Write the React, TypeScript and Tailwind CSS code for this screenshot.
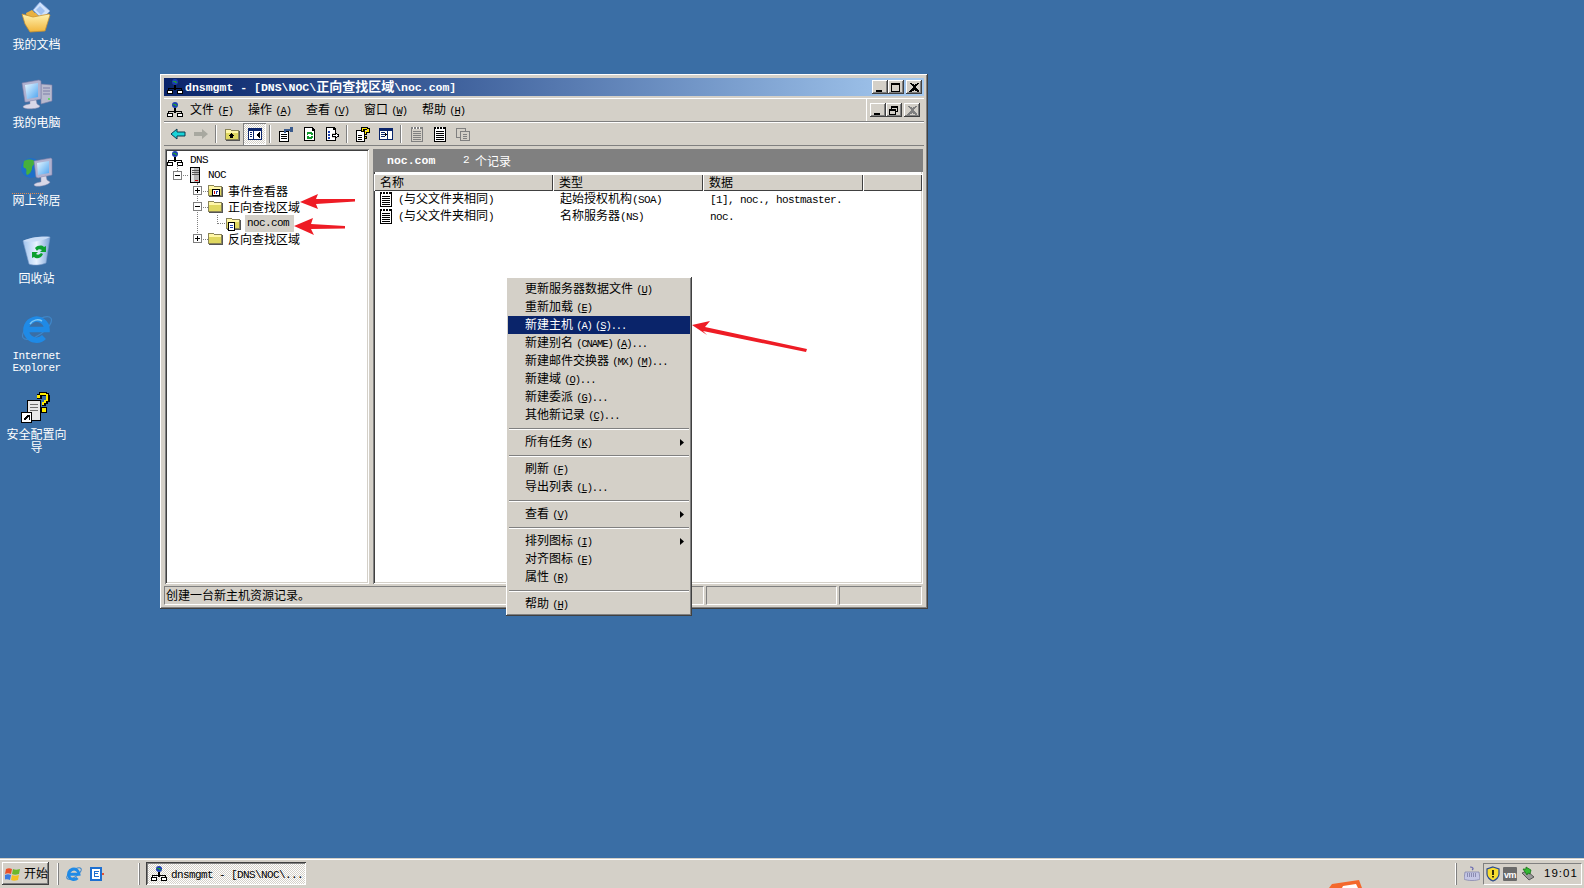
import { ReactNode } from "react";

const cjk = "[font-family:'Noto_Sans_CJK_SC',sans-serif]";
const raised =
  "shadow-[inset_-1px_-1px_#404040,inset_1px_1px_#fff,inset_-2px_-2px_#808080,inset_2px_2px_#d4d0c8]";
const sunken =
  "shadow-[inset_1px_1px_#808080,inset_-1px_-1px_#fff,inset_2px_2px_#404040,inset_-2px_-2px_#d4d0c8]";
const dither = "[background:repeating-conic-gradient(#fff_0_25%,#d4d0c8_0_50%)_0_0/2px_2px]";

// ascii runs get a narrow mono face so they keep the 6px cell of the old bitmap font
function Label({ text, tight }: { text: string; tight?: boolean }) {
  const parts = text.match(/[\x20-\x7e]+|[^\x20-\x7e]+/g) ?? [];
  return (
    <>
      {parts.map((part, i) =>
        /^[\x20-\x7e]/.test(part) ? (
          <span
            key={i}
            className={
              tight
                ? "whitespace-pre [font-family:'Liberation_Mono',monospace] text-[10.5px] tracking-[-1.1px] [word-spacing:-2px]"
                : "whitespace-pre [font-family:'Liberation_Mono',monospace] text-[11px] tracking-[-0.6px]"
            }
          >
            {part.split(/&(.)/).map((piece, j) => (j % 2 ? <u key={j}>{piece}</u> : piece))}
          </span>
        ) : (
          <span key={i}>{part}</span>
        ),
      )}
    </>
  );
}

/* ---------- small 16px icons ---------- */

function DnsIcon() {
  return (
    <svg width="16" height="16" viewBox="0 0 16 16" shapeRendering="crispEdges">
      <circle cx="8" cy="3" r="3" fill="#1c3fb0" shapeRendering="auto" />
      <path d="M6 2h3v1h1v1H8V3H6z" fill="#1f9a3a" />
      <path d="M7 6h2v3h6v2h-1v-1H9v1H7v-1H2v1H1V9h6z" fill="#000" />
      <path d="M0 11h6v4H0zM10 11h6v4h-6z" fill="#000" />
      <path d="M1 12h4v2H1zM11 12h4v2h-4z" fill="#fff" />
    </svg>
  );
}

function ServerIcon() {
  return (
    <svg width="16" height="18" viewBox="0 0 16 18" shapeRendering="crispEdges">
      <path d="M3 1h10v16H3z" fill="#000" />
      <path d="M4 2h8v14H4z" fill="#b8b8b8" />
      <path d="M4 2h3v14H4z" fill="#e8e8e8" />
      <path d="M5 4h7v1H5zM5 6h7v1H5zM5 8h7v1H5z" fill="#555" />
      <path d="M8 14h3v1H8z" fill="#d00000" />
    </svg>
  );
}

function Folder({ children }: { children?: ReactNode }) {
  return (
    <svg width="16" height="16" viewBox="0 0 16 16" shapeRendering="crispEdges">
      <path d="M1 3h5l1 1h8v10H1z" fill="#8a8458" />
      <path d="M2 4h4l1 1h7v8H2z" fill="#fff7a8" />
      <path d="M2 7h12v6H2z" fill="#e0d860" />
      <path d="M15 5h1v10H2v-1h13z" fill="#555" />
      {children}
    </svg>
  );
}

function Doc({ muted }: { muted?: boolean }) {
  const ink = muted ? "#808080" : "#000";
  return (
    <svg width="16" height="16" viewBox="0 0 16 16" shapeRendering="crispEdges">
      <path d="M2 1h12v15H2z" fill={ink} />
      <path d="M3 3h10v12H3z" fill={muted ? "#d4d0c8" : "#fff"} />
      <path d="M4 1h1v2H4zM7 1h1v2H7zM10 1h1v2h-1z" fill="#fff" />
      <path d="M4 5h8v1H4zM4 7h8v1H4zM4 9h8v1H4zM4 11h8v1H4zM4 13h8v1H4z" fill={ink} />
    </svg>
  );
}

function PaneIcon({ flip }: { flip?: boolean }) {
  return (
    <svg width="16" height="16" viewBox="0 0 16 16" shapeRendering="crispEdges">
      <path d="M1 2h14v12H1z" fill="#0a246a" />
      <path d="M2 5h12v8H2z" fill="#fff" />
      <path d={flip ? "M9 5h1v8H9z" : "M6 5h1v8H6z"} fill="#0a246a" />
      <path d={flip ? "M3 6h4v1H3zM3 8h4v1H3zM3 10h4v1H3z" : "M3 6h2v1H3zM3 8h2v1H3zM3 10h2v1H3z"} fill="#0a246a" />
      <path d={flip ? "M7 7h1v1h1v1H8v1H7z" : "M12 6h1v6h-1v-1h-1v-1h-1V8h1V7h1z"} fill="#000" />
    </svg>
  );
}

function ToolIcon({ name }: { name: string }) {
  switch (name) {
    case "back":
      return (
        <svg width="16" height="16" viewBox="0 0 16 16">
          <path d="M1 8l6-5v3h8v4H7v3z" fill="#19d4d8" stroke="#0a3a50" strokeWidth="1" />
        </svg>
      );
    case "forward":
      return (
        <svg width="16" height="16" viewBox="0 0 16 16">
          <path d="M15 8L9 3v3H1v4h8v3z" fill="#a8a8a0" />
        </svg>
      );
    case "up":
      return (
        <Folder>
          <path d="M7 7h1v1h1v1h1v1H9v2H6v-2H5V9h1V8h1z" fill="#000" />
        </Folder>
      );
    case "tree":
      return <PaneIcon />;
    case "pane":
      return <PaneIcon flip />;
    case "props":
      return (
        <svg width="16" height="16" viewBox="0 0 16 16" shapeRendering="crispEdges">
          <path d="M1 5h10v11H1z" fill="#000" />
          <path d="M2 6h8v9H2z" fill="#fff" />
          <path d="M3 8h6v1H3zM3 10h6v1H3zM3 12h6v1H3z" fill="#000" />
          <path d="M6 3h6V1h3v5h-3V5H8v2H6z" fill="#3a5a8c" />
        </svg>
      );
    case "refresh":
      return (
        <svg width="16" height="16" viewBox="0 0 16 16" shapeRendering="crispEdges">
          <path d="M3 1h8l3 3v11H3z" fill="#000" />
          <path d="M4 2h7v3h2v9H4z" fill="#fff" />
          <path d="M6 6h5v1h1v2h-2V8H7v1H6zM6 10h2v1h2v-1h2v2h-1v1H6z" fill="#149a30" />
        </svg>
      );
    case "export":
      return (
        <svg width="16" height="16" viewBox="0 0 16 16" shapeRendering="crispEdges">
          <path d="M2 1h8l2 2v4h-1V4H9V2H3v12h8v-2h1v3H2z" fill="#000" />
          <path d="M3 2h6v2h2v3H8v5h3v2H3z" fill="#fff" />
          <path d="M4 5h2v2H4zM4 8h2v2H4zM4 11h2v2H4z" fill="#1c3fb0" />
          <path d="M11 6h1v1h1v1h2v3h-2v1h-1v1h-1v-2H8V8h3z" fill="#000" />
          <path d="M12 8h1v1h1v1h-1v1h-1v-1H9V9h3z" fill="#fff" />
        </svg>
      );
    case "help":
      return (
        <svg width="16" height="16" viewBox="0 0 16 16" shapeRendering="crispEdges">
          <path d="M1 4h9v12H1z" fill="#000" />
          <path d="M2 5h7v10H2z" fill="#fff" />
          <path d="M3 9h4v1H3zM3 11h4v1H3zM3 13h4v1H3z" fill="#000" />
          <path d="M6 1h7v1h2v5h-3v2H9V6h3V4H9v2H6V3z" fill="#000" />
          <path d="M7 2h5v1h2v3h-3v2h-1V5h2V3H8v2H7z" fill="#ffe800" />
          <path d="M9 10h3v3H9z" fill="#000" />
          <path d="M10 11h1v1h-1z" fill="#ffe800" />
        </svg>
      );
    case "greydoc":
      return <Doc muted />;
    case "doc":
      return <Doc />;
    default:
      return (
        <svg width="16" height="16" viewBox="0 0 16 16" shapeRendering="crispEdges">
          <path d="M1 2h10v3h4v10H5v-3H1z" fill="#808080" />
          <path d="M2 3h8v2H5v6H2z" fill="#d4d0c8" />
          <path d="M6 6h8v8H6z" fill="#d4d0c8" />
          <path d="M8 8h4v1H8zM8 10h4v1H8zM8 12h4v1H8z" fill="#808080" />
        </svg>
      );
  }
}

/* ---------- desktop icons, 32px ---------- */

function DesktopIcon({ name }: { name: string }) {
  switch (name) {
    case "docs":
      return (
        <svg width="32" height="32" viewBox="0 0 32 32">
          <defs>
            <linearGradient id="dfold" x1="0" y1="0" x2="0" y2="1">
              <stop offset="0" stopColor="#fff3b0" />
              <stop offset="1" stopColor="#f2b53c" />
            </linearGradient>
          </defs>
          <path d="M5 12l6-3 3 3 13-2-3 18H8z" fill="#e8b040" />
          <path d="M12 9l7-8 10 9-8 8z" fill="#cfe2fb" stroke="#7c9ed8" strokeWidth="0.8" />
          <path d="M15 9l4-4 5 5-4 4z" fill="#9fc0f0" />
          <path d="M1 13l11 3 16-3 1 1-5 16-15 1-5-8z" fill="url(#dfold)" stroke="#c89030" strokeWidth="0.8" />
        </svg>
      );
    case "computer":
      return (
        <svg width="32" height="32" viewBox="0 0 32 32">
          <defs>
            <linearGradient id="dscr" x1="0" y1="0" x2="1" y2="1">
              <stop offset="0" stopColor="#e8f8ff" />
              <stop offset="1" stopColor="#4ea4f0" />
            </linearGradient>
          </defs>
          <path d="M20 5l11 1v16l-11 3z" fill="#b8bace" stroke="#7c7ea8" strokeWidth="0.6" />
          <path d="M22 9h7M22 12h7M22 15h7" stroke="#7c7ea8" strokeWidth="1" />
          <circle cx="28" cy="20" r="0.9" fill="#40e040" />
          <path d="M1 4l17-3 2 1v18L6 23H4z" fill="#b0b2d0" stroke="#8080a8" strokeWidth="0.6" />
          <path d="M4 6l13-2v14L6 20z" fill="url(#dscr)" />
          <path d="M9 22l6-1 1 4 3 2c0 3-16 4-17 1 0-2 6-3 7-3z" fill="#d8d8e8" stroke="#9090b0" strokeWidth="0.5" />
        </svg>
      );
    case "network":
      return (
        <svg width="32" height="32" viewBox="0 0 32 32">
          <defs>
            <linearGradient id="dscr2" x1="0" y1="0" x2="1" y2="1">
              <stop offset="0" stopColor="#e8f8ff" />
              <stop offset="1" stopColor="#4ea4f0" />
            </linearGradient>
          </defs>
          <circle cx="10" cy="11" r="10" fill="#1e6fc8" />
          <path d="M3 4c4-2 9-2 11 1 0 3-3 3-3 6s-3 7-5 7c-2-3 1-5-2-7-2 0-2-2-1-7z" fill="#46b03c" />
          <path d="M13 4l17-3 1 1v16l-14 3-2-1z" fill="#b0b2d0" stroke="#8080a8" strokeWidth="0.6" />
          <path d="M16 6l12-2v12l-11 2z" fill="url(#dscr2)" />
          <path d="M20 20l5-1 1 4 3 2c0 3-15 6-16 3 0-2 6-3 7-3z" fill="#d8d8e8" stroke="#9090b0" strokeWidth="0.5" />
        </svg>
      );
    case "recycle":
      return (
        <svg width="32" height="32" viewBox="0 0 32 32">
          <defs>
            <linearGradient id="dbin" x1="0" y1="0" x2="1" y2="0">
              <stop offset="0" stopColor="#a0c4ee" />
              <stop offset="0.5" stopColor="#e8f2ff" />
              <stop offset="1" stopColor="#7ca4d8" />
            </linearGradient>
          </defs>
          <path d="M2 6c8-3 20-5 27-4l-4 26c-4 2-13 3-17 1z" fill="url(#dbin)" stroke="#7c9ac8" strokeWidth="0.6" />
          <path d="M2 6c8 2 20 0 27-4-8-1-21 0-27 4z" fill="#c8dcf6" />
          <path d="M14 13c3-3 7-3 9-1l2-1v6h-6l2-2c-2-1-4-1-5 1zM22 19c-2 5-7 5-9 3l-2 1v-6h6l-2 2c2 1 3 1 5-1z" fill="#0ca030" />
        </svg>
      );
    case "ie":
      return (
        <svg width="32" height="32" viewBox="0 0 32 32">
          <ellipse cx="16" cy="15" rx="17" ry="7" transform="rotate(-35 16 15)" fill="none" stroke="#3f86c8" strokeWidth="1.2" />
          <path d="M6.500 16.500H26A10.500 10.500 0 1 0 23 24" fill="none" stroke="#1f8ae6" strokeWidth="5.500" />
          <path d="M9 11a9 9 0 0 1 12-3" fill="none" stroke="#7cc8f8" strokeWidth="1.500" />
        </svg>
      );
    default:
      return (
        <svg width="32" height="32" viewBox="0 0 32 32" shapeRendering="crispEdges">
          <path d="M6 9h14v21H6z" fill="#000" />
          <path d="M7 10h12v19H7z" fill="#e8e8e8" />
          <path d="M9 13h8v1H9zM9 16h8v1H9zM9 19h8v1H9z" fill="#707070" />
          <path d="M18 1h8v1h2v2h1v7h-2v2h-2v2h-4v-4h2v-2h2V5h-4v3h-5V3h2z" fill="#000" />
          <path d="M19 2h6v1h2v7h-2v2h-2v2h-2v-3h2V9h2V4h-6v3h-3V4h3z" fill="#ffee00" />
          <path d="M20 16h6v6h-6z" fill="#000" />
          <path d="M21 17h4v4h-4z" fill="#ffee00" />
          <path d="M0 21h11v11H0z" fill="#000" />
          <path d="M1 22h9v9H1z" fill="#fff" />
          <path d="M4 24h5v5H8v-3H7v1H6v1H5v1H3v-2h1v-1h1v-1h1v-1H4z" fill="#000" />
        </svg>
      );
  }
}

const desktopIcons = [
  { name: "docs", label: "我的文档" },
  { name: "computer", label: "我的电脑" },
  { name: "network", label: "网上邻居" },
  { name: "recycle", label: "回收站" },
  { name: "ie", label: "Internet Explorer" },
  { name: "wizard", label: "安全配置向导" },
];

/* ---------- window parts ---------- */

function CaptionButton({ kind, disabled }: { kind: string; disabled?: boolean }) {
  const ink = disabled ? "#808080" : "#000";
  return (
    <div className={`flex h-[14px] w-[16px] items-center justify-center bg-[#d4d0c8] ${raised}`}>
      <svg width="10" height="9" viewBox="0 0 10 9" shapeRendering="crispEdges">
        {kind === "min" && <path d="M1 7h6v2H1z" fill={ink} />}
        {kind === "max" && <path d="M0 0h9v9H0zM1 2v6h7V2z" fill={ink} fillRule="evenodd" />}
        {kind === "restore" && (
          <path d="M2 0h7v6H7v3H0V3h2zM3 2v1h4v2h1V2zM1 5v3h5V5z" fill={ink} fillRule="evenodd" />
        )}
        {kind === "close" && (
          <path
            d="M0 0h2l1 1h1l1 1 1-1h1l1-1h2L8 2 7 3 6 4l1 1 1 1 2 2v1H8L7 8H6L5 7 4 8H3L2 9H0V8l2-2 1-1 1-1-1-1-1-1z"
            fill={ink}
          />
        )}
      </svg>
    </div>
  );
}

const menus = ["文件 (&F)", "操作 (&A)", "查看 (&V)", "窗口 (&W)", "帮助 (&H)"];

const toolbar = [
  ["back", "forward"],
  ["up", "tree"],
  ["props", "refresh", "export"],
  ["help", "pane"],
  ["greydoc", "doc", "greystack"],
];

function Toolbar() {
  return (
    <div className="flex h-[24px] items-center border-y border-t-white border-b-[#808080] pl-[2px]">
      {toolbar.map((group, g) => (
        <div key={g} className="flex items-center">
          {g > 0 && (
            <div className="mx-[3px] h-[18px] w-[2px] border-l border-r border-l-[#808080] border-r-white" />
          )}
          {group.map((name) => (
            <div
              key={name}
              className={
                name === "tree"
                  ? `flex h-[22px] w-[23px] items-center justify-center ${dither} shadow-[inset_1px_1px_#808080,inset_-1px_-1px_#fff]`
                  : "flex h-[22px] w-[23px] items-center justify-center"
              }
            >
              <ToolIcon name={name} />
            </div>
          ))}
        </div>
      ))}
    </div>
  );
}

function Expander({ open }: { open?: boolean }) {
  return (
    <div className="relative z-10 flex h-[9px] w-[9px] items-center justify-center border border-[#808080] bg-white">
      <div className="h-[1px] w-[5px] bg-black" />
      {!open && <div className="absolute h-[5px] w-[1px] bg-black" />}
    </div>
  );
}

function TreeRow({
  indent,
  expander,
  icon,
  children,
}: {
  indent: string;
  expander?: ReactNode;
  icon: ReactNode;
  children: ReactNode;
}) {
  return (
    <div className={`flex h-[16px] items-center ${indent}`}>
      <div className="flex w-[10px] justify-center">{expander}</div>
      <div className="relative z-10 ml-[5px] mr-[5px] flex h-[16px] w-[16px] items-center justify-center">{icon}</div>
      {children}
    </div>
  );
}

function Tree() {
  return (
    <div className={`relative w-[204px] bg-white pt-[2px] pl-[2px] ${sunken}`}>
      {/* dotted connectors */}
      <div className="absolute left-[12px] top-[16px] h-[10px] border-l border-dotted border-[#808080]" />
      <div className="absolute left-[32px] top-[34px] h-[56px] border-l border-dotted border-[#808080]" />
      <div className="absolute left-[13px] top-[26px] w-[10px] border-t border-dotted border-[#808080]" />
      <div className="absolute left-[33px] top-[42px] w-[10px] border-t border-dotted border-[#808080]" />
      <div className="absolute left-[33px] top-[58px] w-[10px] border-t border-dotted border-[#808080]" />
      <div className="absolute left-[52px] top-[66px] h-[9px] border-l border-dotted border-[#808080]" />
      <div className="absolute left-[52px] top-[74px] w-[10px] border-t border-dotted border-[#808080]" />
      <div className="absolute left-[33px] top-[90px] w-[10px] border-t border-dotted border-[#808080]" />

      <div className="flex h-[16px] items-center">
        <DnsIcon />
        <span className="ml-[7px]">
          <Label text="DNS" />
        </span>
      </div>
      <TreeRow indent="pl-[5px]" expander={<Expander open />} icon={<ServerIcon />}>
        <Label text="NOC" />
      </TreeRow>
      <TreeRow
        indent="pl-[25px] pb-[2px]"
        expander={<Expander />}
        icon={
          <Folder>
            <path d="M5 7h8v7H5z" fill="#000" />
            <path d="M6 8h6v5H6z" fill="#fff" />
            <path d="M7 9h1v3H7z" fill="#d00000" />
            <path d="M9 9h2v1h-1v2H9z" fill="#1c3fb0" />
          </Folder>
        }
      >
        <Label text="事件查看器" />
      </TreeRow>
      <TreeRow indent="pl-[25px] pb-[2px]" expander={<Expander open />} icon={<Folder />}>
        <Label text="正向查找区域" />
      </TreeRow>
      <div className="flex h-[16px] items-center pl-[58px]">
        <div className="relative z-10 flex">
          <Folder>
            <path d="M3 7h7v9H3z" fill="#000" />
            <path d="M4 8h5v7H4z" fill="#fff" />
            <path d="M5 10h3v1H5zM5 12h3v1H5z" fill="#1c3fb0" />
          </Folder>
        </div>
        <span className="ml-[4px] flex h-[17px] w-[49px] items-center bg-[#d4d0c8] pl-[2px] pt-[1px]">
          <Label text="noc.com" />
        </span>
      </div>
      <TreeRow indent="pl-[25px] pb-[2px]" expander={<Expander />} icon={<Folder />}>
        <Label text="反向查找区域" />
      </TreeRow>
    </div>
  );
}

const columns = [
  { title: "名称", width: "w-[179px]" },
  { title: "类型", width: "w-[150px]" },
  { title: "数据", width: "w-[160px]" },
  { title: "", width: "flex-1" },
];

const records = [
  { name: "(与父文件夹相同)", type: "起始授权机构(SOA)", data: "[1], noc., hostmaster." },
  { name: "(与父文件夹相同)", type: "名称服务器(NS)", data: "noc." },
];

function ListPane() {
  return (
    <div className={`flex flex-1 flex-col bg-white ${sunken}`}>
      <div className="flex h-[23px] items-center bg-[#808080] pl-[14px] text-white">
        <span className="w-[76px] [font-family:'Liberation_Mono',monospace] text-[11.5px] font-bold">noc.com</span>
        <Label text="2 个记录" />
      </div>
      <div className="mt-[2px] flex h-[17px] px-[1px]">
        {columns.map((col) => (
          <div
            key={col.width}
            className={`flex items-center bg-[#d4d0c8] pb-[2px] pl-[6px] shadow-[inset_1px_1px_#fff,inset_-1px_-1px_#404040] ${col.width}`}
          >
            {col.title}
          </div>
        ))}
      </div>
      <div className="flex flex-col">
        {records.map((row, i) => (
          <div key={i} className="flex h-[17px] items-center pb-[2px]">
            <div className="flex w-[187px] items-center pl-[5px]">
              <Doc />
              <span className="ml-[4px]">
                <Label text={row.name} />
              </span>
            </div>
            <div className="w-[150px]">
              <Label text={row.type} />
            </div>
            <div>
              <Label text={row.data} />
            </div>
          </div>
        ))}
      </div>
    </div>
  );
}

/* ---------- context menu ---------- */

type MenuEntry = { text: string; sub?: boolean; active?: boolean } | "sep";

const contextMenu: MenuEntry[] = [
  { text: "更新服务器数据文件 (&U)" },
  { text: "重新加载 (&E)" },
  { text: "新建主机 (A) (&S)...", active: true },
  { text: "新建别名 (CNAME) (&A)..." },
  { text: "新建邮件交换器 (MX) (&M)..." },
  { text: "新建域 (&O)..." },
  { text: "新建委派 (&G)..." },
  { text: "其他新记录 (&C)..." },
  "sep",
  { text: "所有任务 (&K)", sub: true },
  "sep",
  { text: "刷新 (&F)" },
  { text: "导出列表 (&L)..." },
  "sep",
  { text: "查看 (&V)", sub: true },
  "sep",
  { text: "排列图标 (&I)", sub: true },
  { text: "对齐图标 (&E)" },
  { text: "属性 (&R)" },
  "sep",
  { text: "帮助 (&H)" },
];

function ContextMenu() {
  return (
    <div className={`absolute left-[506px] top-[277px] w-[186px] bg-[#d4d0c8] px-[2px] py-[3px] text-black ${raised}`}>
      {contextMenu.map((entry, i) =>
        entry === "sep" ? (
          <div key={i} className="flex h-[9px] items-center px-[1px]">
            <div className="h-[2px] w-full border-y border-t-[#808080] border-b-white" />
          </div>
        ) : (
          <div
            key={i}
            className={
              entry.active
                ? "flex h-[18px] items-center bg-[#0a246a] pl-[17px] pr-[6px] text-white"
                : "flex h-[18px] items-center pl-[17px] pr-[6px]"
            }
          >
            <span>
              <Label text={entry.text} tight />
            </span>
            {entry.sub && (
              <svg className="ml-auto" width="4" height="7" viewBox="0 0 4 7">
                <path d="M0 0l4 3.5L0 7z" fill="#000" />
              </svg>
            )}
          </div>
        ),
      )}
    </div>
  );
}

/* ---------- window ---------- */

function DnsWindow() {
  return (
    <div className={`absolute left-[160px] top-[74px] flex h-[535px] w-[768px] flex-col bg-[#d4d0c8] p-[4px] text-black ${raised}`}>
      <div className="flex h-[18px] items-center bg-gradient-to-r from-[#0a246a] to-[#a6caf0] pl-[3px] pr-[2px] text-white">
        <DnsIcon />
        <span className="ml-[2px] whitespace-pre text-[13px] font-bold leading-[18px]">
          <span className="[font-family:'Liberation_Mono',monospace] text-[11.5px]">dnsmgmt - [DNS\NOC\</span>
          正向查找区域
          <span className="[font-family:'Liberation_Mono',monospace] text-[11.5px]">\noc.com]</span>
        </span>
        <div className="ml-auto flex items-center">
          <CaptionButton kind="min" />
          <CaptionButton kind="max" />
          <div className="ml-[2px]">
            <CaptionButton kind="close" />
          </div>
        </div>
      </div>

      <div className="mt-[2px] flex h-[24px] border-y border-t-white border-b-[#808080]">
        <div className="flex flex-1 items-center pl-[3px]">
          <DnsIcon />
          {menus.map((menu) => (
            <div key={menu} className="ml-[7px] w-[51px]">
              <Label text={menu} tight />
            </div>
          ))}
        </div>
        <div className="flex w-[58px] items-center border-l border-l-white pl-[3px]">
          <CaptionButton kind="min" />
          <CaptionButton kind="restore" />
          <div className="ml-[2px]">
            <CaptionButton kind="close" disabled />
          </div>
        </div>
      </div>

      <Toolbar />

      <div className="mt-[3px] flex min-h-0 flex-1 gap-[4px] px-[1px]">
        <Tree />
        <ListPane />
      </div>

      <div className="mt-[2px] flex h-[19px] gap-[2px] pr-[2px]">
        <div className="flex flex-1 items-center border border-t-[#808080] border-l-[#808080] border-r-white border-b-white pb-[2px] pl-[1px]">
          <Label text="创建一台新主机资源记录。" />
        </div>
        <div className="w-[131px] border border-t-[#808080] border-l-[#808080] border-r-white border-b-white" />
        <div className="w-[83px] border border-t-[#808080] border-l-[#808080] border-r-white border-b-white" />
      </div>
    </div>
  );
}

/* ---------- taskbar ---------- */

function StartFlag() {
  return (
    <svg width="16" height="16" viewBox="0 0 16 16">
      <path d="M1 3c2-1 4-1 6 0l-1 5c-2-1-4-1-6 0z" fill="#e8502a" />
      <path d="M8 3c2 1 4 1 7 0l-1 5c-3 1-5 1-7 0z" fill="#6cb82c" />
      <path d="M0 9c2-1 4-1 6 0l-1 5c-2-1-4-1-6 0z" fill="#3c7ce0" />
      <path d="M7 9c2 1 4 1 7 0l-1 5c-3 1-5 1-7 0z" fill="#f4c020" />
    </svg>
  );
}

function SmallIe() {
  return (
    <svg width="16" height="16" viewBox="0 0 32 32">
      <ellipse cx="16" cy="15" rx="17" ry="7" transform="rotate(-35 16 15)" fill="none" stroke="#3f86c8" strokeWidth="2" />
      <path d="M6.500 16.500H26A10.500 10.500 0 1 0 23 24" fill="none" stroke="#1f8ae6" strokeWidth="6" />
    </svg>
  );
}

function Taskbar() {
  return (
    <div className="flex h-[30px] items-center border-t border-t-[#d4d0c8] bg-[#d4d0c8] text-black shadow-[inset_0_1px_#fff]">
      <div className={`ml-[2px] flex h-[23px] w-[47px] items-center bg-[#d4d0c8] pl-[3px] ${raised}`}>
        <StartFlag />
        <span className="ml-[3px] mb-[2px] whitespace-nowrap">开始</span>
      </div>
      <div className="ml-[8px] h-[22px] w-[2px] border-x border-l-white border-r-[#808080]" />
      <div className="ml-[7px] flex gap-[6px]">
        <SmallIe />
        <svg width="16" height="16" viewBox="0 0 16 16" shapeRendering="crispEdges">
          <path d="M2 1h12v14H2z" fill="#1e6fd0" />
          <path d="M4 3h8v10H4z" fill="#fff" />
          <path d="M6 5h5v1H7v1h3v1H7v2h4v1H6z" fill="#1e6fd0" />
          <path d="M14 7h2v2h-2z" fill="#e85030" />
        </svg>
      </div>
      <div className="ml-[34px] h-[22px] w-[2px] border-x border-l-white border-r-[#808080]" />
      <div className={`ml-[6px] flex h-[23px] w-[160px] items-center pl-[5px] ${dither} shadow-[inset_1px_1px_#404040,inset_-1px_-1px_#fff,inset_2px_2px_#808080]`}>
        <DnsIcon />
        <span className="ml-[4px]">
          <Label text="dnsmgmt - [DNS\NOC\..." />
        </span>
      </div>
      <div className="ml-auto h-[22px] w-[2px] border-x border-l-white border-r-[#808080]" />
      <div className="ml-[7px] flex items-center">
        <svg width="16" height="16" viewBox="0 0 16 16">
          <path d="M6 1c3 0 4 2 2 3" fill="none" stroke="#6a6ab0" strokeWidth="1.2" />
          <path d="M1 6h14l1 7c-3 2-13 2-16 0z" fill="#c4c6e4" stroke="#7c7ea8" strokeWidth="0.7" />
          <path d="M3 8h10M3 10h10" stroke="#50507c" strokeWidth="1" strokeDasharray="1 1" />
        </svg>
      </div>
      <div className="ml-[3px] mr-[2px] flex h-[22px] w-[99px] items-center border border-t-[#808080] border-l-[#808080] border-r-white border-b-white pl-[1px]">
        <svg width="16" height="16" viewBox="0 0 16 16">
          <path d="M8 1l6 2v5c0 3-3 6-6 7-3-1-6-4-6-7V3z" fill="#f8dc30" stroke="#2a4a90" strokeWidth="1.2" />
          <path d="M7.2 4h1.6v5H7.2zM7.2 10h1.6v1.6H7.2z" fill="#000" />
        </svg>
        <div className="ml-[2px] flex h-[14px] w-[14px] items-end justify-center rounded-[1px] bg-[#6a6a6a] leading-[12px]">
          <span className="[font-family:'Liberation_Sans',sans-serif] text-[9px] font-bold tracking-[-0.5px] text-white">vm</span>
        </div>
        <svg className="ml-[3px]" width="16" height="16" viewBox="0 0 16 16">
          <path d="M2 7l7 7 5-3-7-6z" fill="#9a9a9a" stroke="#404040" strokeWidth="0.8" />
          <path d="M3 3h3V1l5 3-1 4-2-1-1 2z" fill="#34b834" stroke="#0e6a0e" strokeWidth="0.7" />
        </svg>
        <span className="ml-[8px] whitespace-pre [font-family:'Liberation_Sans',sans-serif] text-[11.5px] tracking-[1px]">19:01</span>
      </div>
    </div>
  );
}

export default function App() {
  return (
    <div className={`relative flex h-[888px] w-[1584px] flex-col overflow-hidden bg-[#3a6ea5] text-[12px] leading-[13px] ${cjk}`}>
      <div className="flex min-h-0 flex-1 flex-col">
        {desktopIcons.map((icon) => (
          <div key={icon.name} className="flex h-[78px] w-[73px] flex-col items-center pt-[1px] text-center text-white">
            <DesktopIcon name={icon.name} />
            <div className="mt-[4px] w-[64px] break-words">
              {icon.name === "ie" ? (
                <span className="block pt-[1px] [font-family:'Liberation_Mono',monospace] text-[11px] leading-[12px] tracking-[-0.6px]">
                  Internet Explorer
                </span>
              ) : (
                icon.label
              )}
            </div>
          </div>
        ))}
      </div>
      <div className="absolute left-[12px] top-[193px] w-[31px] border-t border-dotted border-[#e08a50]" />

      <DnsWindow />
      <ContextMenu />

      {/* hand drawn annotations on the screenshot */}
      <svg className="pointer-events-none absolute left-0 top-0" width="1584" height="888" viewBox="0 0 1584 888">
        <path d="M300 202l18-8-2 5 39 0v2.500l-39 2.500 2 5z" fill="#ee1c25" />
        <path d="M294 226l19-8-2 6 34 2v2.500l-34 .5 3 6z" fill="#ee1c25" />
        <path d="M692 325l18-4-5 6 102 22-1 3-103-21 4 4z" fill="#ee1c25" />
        <path d="M1329 888l3-4 27-4 3 8z" fill="#f4682c" />
        <path d="M1342 888l1-2 13-2 2 4z" fill="#fff" />
      </svg>

      <Taskbar />
    </div>
  );
}
